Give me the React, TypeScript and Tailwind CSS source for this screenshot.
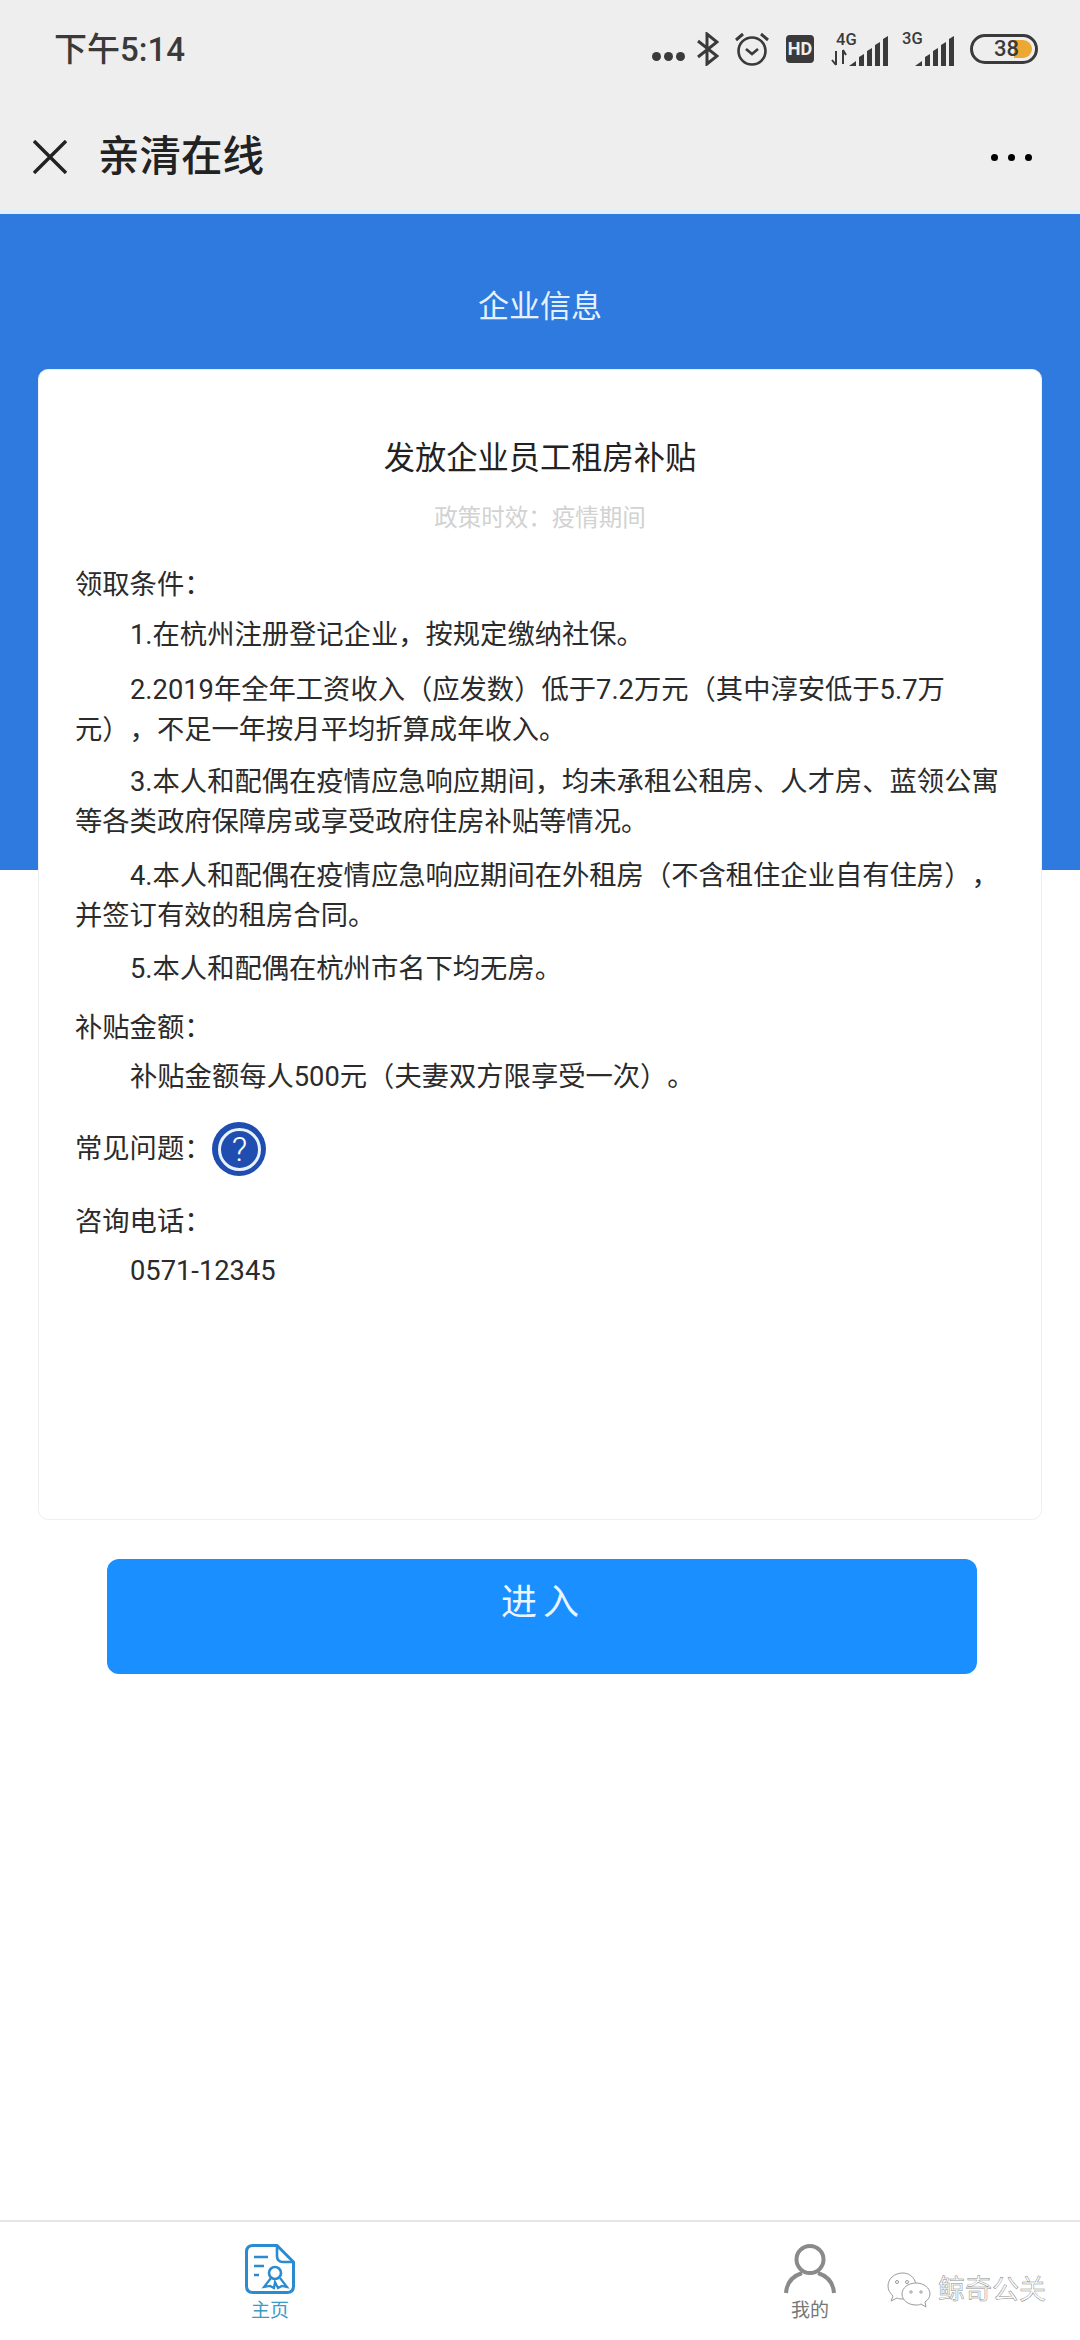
const FONT = "font-['Roboto','Noto_Sans_CJK_SC',sans-serif]";

function Signal({ x = 0 }: { x?: number }) {
  return (
    <g transform={`translate(${x} 0)`} fill="#3a3a3a">
      <path d="M0 34 L7 29 V34 Z" />
      <path d="M10 34 V25 L15 22 V34 Z" />
      <path d="M18 34 V19 L23 16 V34 Z" />
      <path d="M26 34 V13 L31 10 V34 Z" />
      <path d="M34 34 V7 L39 4 V34 Z" />
    </g>
  );
}

function StatusIcons() {
  return (
    <div className="flex items-center">
      <div className="flex gap-[3px] mt-[15px] mr-[12px]">
        <span className="w-[9px] h-[9px] rounded-full bg-[#3a3a3a]" />
        <span className="w-[9px] h-[9px] rounded-full bg-[#3a3a3a]" />
        <span className="w-[9px] h-[9px] rounded-full bg-[#3a3a3a]" />
      </div>
      {/* bluetooth */}
      <svg width="22" height="34" viewBox="0 0 22 34" fill="none" stroke="#3a3a3a" strokeWidth="3" className="mr-[15px]">
        <path d="M1 9 L20 24 L10 32 V2 L20 10 L1 25" />
      </svg>
      {/* alarm */}
      <svg width="36" height="34" viewBox="0 0 36 34" fill="none" stroke="#3a3a3a" strokeWidth="2.6" className="mr-[16px]">
        <circle cx="18" cy="19" r="13.5" />
        <path d="M12 17 L18 22 L24 17" />
        <path d="M2 8 L9 2 M34 8 L27 2" strokeWidth="3" />
      </svg>
      {/* HD */}
      <div className="w-[28px] h-[28px] rounded-[4px] bg-[#3a3a3a] flex items-center justify-center text-[18px] leading-none font-bold text-[#eeeeee] mr-[17px] font-['Roboto',sans-serif]">
        HD
      </div>
      {/* 4G */}
      <svg width="58" height="40" viewBox="0 -6 58 40" className="-mt-[6px] mr-[13px]">
        <text x="5" y="13" fontSize="16.5" fill="#3a3a3a" fontFamily="Roboto, sans-serif" fontWeight="500">4G</text>
        <path d="M5 19 V33 M1 28 L5 33 M12 32 V18 M12 18 L15 23" stroke="#3a3a3a" strokeWidth="2" fill="none" />
        <Signal x={18} />
      </svg>
      {/* 3G */}
      <svg width="52" height="40" viewBox="0 -6 52 40" className="-mt-[6px] mr-[16px]">
        <text x="0" y="12" fontSize="16.5" fill="#3a3a3a" fontFamily="Roboto, sans-serif" fontWeight="500">3G</text>
        <Signal x={13} />
      </svg>
      {/* battery */}
      <div className="relative w-[68px] h-[30px] rounded-full border-[3px] border-[#3a3a3a] flex items-center justify-center">
        <span className="absolute right-[3px] top-[3px] w-[18px] h-[18px] rounded-r-full bg-[#eda733]" />
        <span className="relative pl-[5px] text-[22px] leading-none font-medium text-[#3a3a3a] font-['Roboto',sans-serif]">38</span>
      </div>
    </div>
  );
}

function HomeIcon() {
  return (
    <svg width="50" height="50" viewBox="0 0 50 50" fill="none" stroke="#2a8bd0" strokeWidth="2.6">
      <path d="M8 1.5 H32 L48.5 18 V42 Q48.5 48.5 42 48.5 H8 Q1.5 48.5 1.5 42 V8 Q1.5 1.5 8 1.5 Z" strokeWidth="3" />
      <path d="M32 2 V12 Q32 18 38 18 H48" />
      <path d="M9 13 H23 M9 22 H19 M9 31 H14" />
      <circle cx="30" cy="29" r="6" />
      <path d="M26 34 L19 43 L25 42 L29 44 L30 38 L33 44 L37 42 L42 43 L35 34" strokeWidth="2.2" />
    </svg>
  );
}

function UserIcon() {
  return (
    <svg width="52" height="50" viewBox="0 0 52 50" fill="none" stroke="#8a8a8a" strokeWidth="4">
      <ellipse cx="26" cy="15.5" rx="13.5" ry="13.5" />
      <path d="M2 49 Q3 34 18 29 M50 49 Q49 34 34 29" />
    </svg>
  );
}

function WechatMark() {
  return (
    <svg width="44" height="38" viewBox="0 0 44 38" fill="#ffffff" stroke="#9a9a9a" strokeWidth="1">
      <path d="M16 2 C7 2 1 8 1 15 C1 19 3 22 6 25 L4 30 L10 27 C12 28 14 28 16 28 C28 28 31 18 28 10 C26 5 21 2 16 2 Z" />
      <path d="M29 12 C21 12 15 17 15 23 C15 29 21 34 29 34 C31 34 32 34 34 33 L39 36 L38 31 C41 29 43 26 43 23 C43 17 37 12 29 12 Z" />
      <circle cx="10" cy="11" r="1.5" />
      <circle cx="20" cy="11" r="1.5" />
      <circle cx="24" cy="21" r="1.2" />
      <circle cx="34" cy="21" r="1.2" />
    </svg>
  );
}

export default function App() {
  return (
    <div className={`${FONT} relative flex flex-col w-[1080px] h-[2340px] bg-white overflow-hidden`}>
      {/* barra de status + titulo */}
      <div className="h-[214px] bg-[#eeeeee] border-b-[4px] border-[#e4f0f8]">
        <div className="h-[98px] flex items-center justify-between pl-[54px] pr-[42px]">
          <span className="text-[33px] leading-none font-medium text-[#3a3a3a]">下午5:14</span>
          <StatusIcons />
        </div>
        <div className="h-[112px] pt-[6px] flex items-center justify-between pl-[33px] pr-[48px]">
          <div className="flex items-center gap-[31px]">
            <svg width="34" height="34" viewBox="0 0 34 34" stroke="#222222" strokeWidth="3.4">
              <path d="M1 1 L33 33 M33 1 L1 33" />
            </svg>
            <span className="text-[41.5px] leading-none font-medium text-[#222222]">亲清在线</span>
          </div>
          <div className="flex gap-[10px]">
            <span className="w-[7px] h-[7px] rounded-full bg-black" />
            <span className="w-[7px] h-[7px] rounded-full bg-black" />
            <span className="w-[7px] h-[7px] rounded-full bg-black" />
          </div>
        </div>
      </div>

      {/* fundo azul */}
      <div className="h-[656px] shrink-0 bg-[#2f7ade] pt-[70px] text-center text-[31px] leading-[46px] text-[#e6f1ff]">
        企业信息
      </div>

      {/* cartao */}
      <div className="-mt-[501px] mx-[38px] h-[1151px] shrink-0 bg-white rounded-[10px] border border-[#efefef] pl-[36px] pr-[30px] pt-[66px] text-[27.3px] leading-[40px] text-[#2b2b2b] [text-spacing-trim:space-all]">
        <h1 className="pr-[6px] text-center text-[31.25px] leading-[46px] text-[#222222]">发放企业员工租房补贴</h1>
        <p className="mt-[19px] pr-[6px] text-center text-[23.5px] leading-[34px] text-[#d2d2d2]">政策时效：疫情期间</p>

        <p className="mt-[30px]">领取条件：</p>
        <p className="mt-[10px] indent-[55px]">1.在杭州注册登记企业，按规定缴纳社保。</p>
        <p className="mt-[15px] indent-[55px]">2.2019年全年工资收入（应发数）低于7.2万元（其中淳安低于5.7万元），不足一年按月平均折算成年收入。</p>
        <p className="mt-[12px] indent-[55px]">3.本人和配偶在疫情应急响应期间，均未承租公租房、人才房、蓝领公寓等各类政府保障房或享受政府住房补贴等情况。</p>
        <p className="mt-[14px] indent-[55px]">4.本人和配偶在疫情应急响应期间在外租房（不含租住企业自有住房），并签订有效的租房合同。</p>
        <p className="mt-[13px] indent-[55px]">5.本人和配偶在杭州市名下均无房。</p>

        <p className="mt-[19px]">补贴金额：</p>
        <p className="mt-[9px] indent-[55px]">补贴金额每人500元（夫妻双方限享受一次）。</p>

        <div className="mt-[25px] flex items-center h-[54px]">
          <span>常见问题：</span>
          <span className="ml-[1px] w-[54px] h-[54px] rounded-full bg-[#1f4eb0] flex items-center justify-center">
            <span className="w-[43px] h-[43px] rounded-full border-[3px] border-[#e8f2ff] flex items-center justify-center text-[34px] leading-none font-light text-white">?</span>
          </span>
        </div>

        <p className="mt-[26px]">咨询电话：</p>
        <p className="mt-[9px] indent-[55px]">0571-12345</p>
      </div>

      <button className="mt-[39px] ml-[107px] mr-[103px] h-[115px] shrink-0 bg-[#1a8fff] rounded-[12px] pb-[28px] pl-[2px] text-[36px] leading-none tracking-[6px] text-[#eaf6ff]">
        进入
      </button>

      <div className="flex-1" />

      {/* tab bar */}
      <div className="h-[120px] shrink-0 grid grid-cols-2 border-t-2 border-[#e6e6e6] pt-[22px]">
        <div className="flex flex-col items-center">
          <HomeIcon />
          <span className="mt-[5px] text-[19px] leading-[24px] text-[#3b9bc4]">主页</span>
        </div>
        <div className="flex flex-col items-center">
          <UserIcon />
          <span className="mt-[5px] text-[19px] leading-[24px] text-[#777777]">我的</span>
        </div>
      </div>

      {/* marca d'agua */}
      <div className="absolute left-[887px] top-[2271px] flex items-center gap-[7px]">
        <WechatMark />
        <span className="text-[27px] leading-none text-white [-webkit-text-stroke:0.5px_#8a8a8a]">鲸奇公关</span>
      </div>
    </div>
  );
}
